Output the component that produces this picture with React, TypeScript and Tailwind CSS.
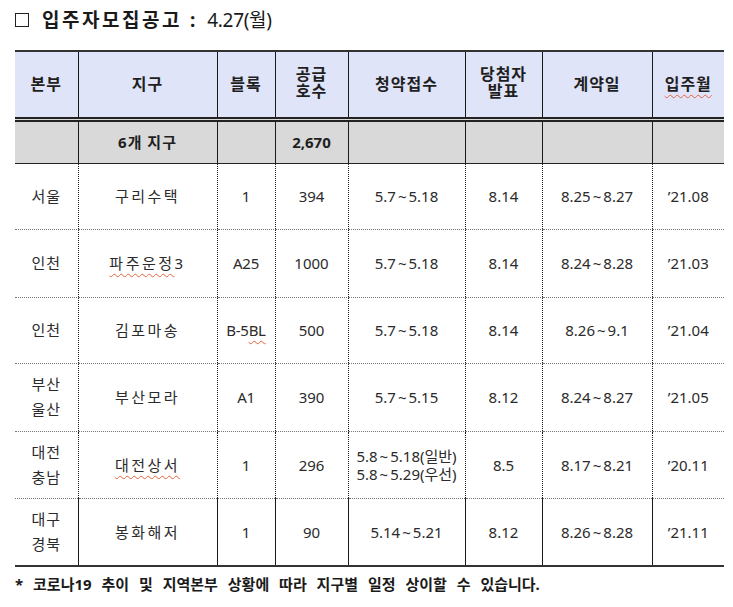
const font = "font-['Noto_Sans','Noto_Sans_CJK_KR',sans-serif]";

type Row = {
  hq: string[];
  district: React.ReactNode;
  block: React.ReactNode;
  units: string;
  apply: string[];
  winner: string;
  contract: string;
  move: string;
  h: string;
};

const squiggle = "underline decoration-wavy decoration-[#e8643c] decoration-1 underline-offset-[4px]";

// malgun-style tilde is wider than the one in Noto Sans
function Range({ text }: { text: string }) {
  const [a, b] = text.split("~");
  if (b === undefined) return <>{text}</>;
  return (
    <>
      {a}
      <span className="mx-[2px]">~</span>
      {b}
    </>
  );
}

const rows: Row[] = [
  { hq: ["서울"], district: "구리수택", block: "1", units: "394", apply: ["5.7~5.18"], winner: "8.14", contract: "8.25~8.27", move: "’21.08", h: "h-[66px]" },
  {
    hq: ["인천"],
    district: (
      <>
        <span className={squiggle}>파주운정</span>3
      </>
    ),
    block: "A25",
    units: "1000",
    apply: ["5.7~5.18"],
    winner: "8.14",
    contract: "8.24~8.28",
    move: "’21.03",
    h: "h-[68px]",
  },
  {
    hq: ["인천"],
    district: "김포마송",
    block: (
      <>
        B-5<span className={squiggle}>BL</span>
      </>
    ),
    units: "500",
    apply: ["5.7~5.18"],
    winner: "8.14",
    contract: "8.26~9.1",
    move: "’21.04",
    h: "h-[66px]",
  },
  { hq: ["부산", "울산"], district: "부산모라", block: "A1", units: "390", apply: ["5.7~5.15"], winner: "8.12", contract: "8.24~8.27", move: "’21.05", h: "h-[68px]" },
  {
    hq: ["대전", "충남"],
    district: <span className={squiggle}>대전상서</span>,
    block: "1",
    units: "296",
    apply: ["5.8~5.18(일반)", "5.8~5.29(우선)"],
    winner: "8.5",
    contract: "8.17~8.21",
    move: "’20.11",
    h: "h-[67px]",
  },
  { hq: ["대구", "경북"], district: "봉화해저", block: "1", units: "90", apply: ["5.14~5.21"], winner: "8.12", contract: "8.26~8.28", move: "’21.11", h: "h-[68px]" },
];

const vline = "border-l-[1.5px] border-l-[#1a1a1a]";
const headCell = "border-t-2 border-t-[#333] border-b-[5px] border-b-[#222] border-double";

export default function App() {
  return (
    <div className={`${font} bg-white w-[733px] h-[607px] text-[#2b2b2b]`}>
      {/* title */}
      <div className="h-[50px] pl-[15px] pt-[7px] flex items-start">
        <div className="flex items-center h-[26px]">
          <span className="w-[14px] h-[14px] border-[1.5px] border-[#222] mr-[13px]" />
          <span className="text-[19px] font-bold tracking-[2.5px] text-[#1a1a1a]">입주자모집공고</span>
          <span className="text-[19px] font-bold ml-[8px] mr-[12px] text-[#1a1a1a]">:</span>
          <span className="text-[19px] text-[#1a1a1a] tracking-[-0.3px]">4.27(월)</span>
        </div>
      </div>

      {/* table */}
      <table className="ml-[15px] w-[709px] table-fixed border-collapse text-center">
        <colgroup>
          <col className="w-[63px]" />
          <col className="w-[139px]" />
          <col className="w-[58px]" />
          <col className="w-[73px]" />
          <col className="w-[117px]" />
          <col className="w-[77px]" />
          <col className="w-[110px]" />
          <col className="w-[72px]" />
        </colgroup>
        <thead>
          <tr className="h-[68px] bg-[#e0e4f8] text-[16px] font-bold text-[#1f1f1f] leading-[17px] tracking-[1px]">
            <th className={headCell}>본부</th>
            <th className={`${vline} ${headCell}`}>지구</th>
            <th className={`${vline} ${headCell}`}>블록</th>
            <th className={`${vline} ${headCell} pb-[2px]`}>
              <div>공급</div>
              <div>호수</div>
            </th>
            <th className={`${vline} ${headCell}`}>청약접수</th>
            <th className={`${vline} ${headCell} pb-[2px]`}>
              <div>당첨자</div>
              <div>발표</div>
            </th>
            <th className={`${vline} ${headCell}`}>계약일</th>
            <th className={`${vline} ${headCell}`}>
              <span className={squiggle}>입주월</span>
            </th>
          </tr>
        </thead>
        <tbody className="text-[15px]">
          <tr className="h-[44px] bg-[#d9d9d9] font-bold text-[#1f1f1f]">
            <td className="border-b-[1.5px] border-b-[#222]" />
            <td className={`${vline} border-b-[1.5px] border-b-[#222] tracking-[1px]`}>6개 지구</td>
            <td className={`${vline} border-b-[1.5px] border-b-[#222]`} />
            <td className={`${vline} border-b-[1.5px] border-b-[#222]`}>2,670</td>
            <td className={`${vline} border-b-[1.5px] border-b-[#222]`} />
            <td className={`${vline} border-b-[1.5px] border-b-[#222]`} />
            <td className={`${vline} border-b-[1.5px] border-b-[#222]`} />
            <td className={`${vline} border-b-[1.5px] border-b-[#222]`} />
          </tr>
          {rows.map((r, i) => {
            const last = i === rows.length - 1;
            const bb = last ? "border-b-2 border-b-[#333]" : "border-b border-dotted border-b-[#777]";
            return (
              <tr key={i} className={`${r.h} leading-[20px]`}>
                <td className={`${bb} tracking-[1px]`}>
                  {r.hq.map((t) => (
                    <div key={t} className="leading-[25px]">{t}</div>
                  ))}
                </td>
                <td className={`${vline} ${bb} tracking-[2.5px]`}>{r.district}</td>
                <td className={`${vline} ${bb} tracking-[-0.3px]`}>{r.block}</td>
                <td className={`${vline} ${bb}`}>{r.units}</td>
                <td className={`${vline} ${bb}`}>
                  {r.apply.map((t) => (
                    <div key={t} className="leading-[18px]">
                      <Range text={t} />
                    </div>
                  ))}
                </td>
                <td className={`${vline} ${bb}`}>{r.winner}</td>
                <td className={`${vline} ${bb}`}>
                  <Range text={r.contract} />
                </td>
                <td className={`${vline} ${bb}`}>{r.move}</td>
              </tr>
            );
          })}
        </tbody>
      </table>

      {/* footnote */}
      <p className="pl-[15px] mt-[6px] text-[15px] font-bold text-[#1a1a1a] [word-spacing:6px]">
        * 코로나19 추이 및 지역본부 상황에 따라 지구별 일정 상이할 수 있습니다.
      </p>
    </div>
  );
}
